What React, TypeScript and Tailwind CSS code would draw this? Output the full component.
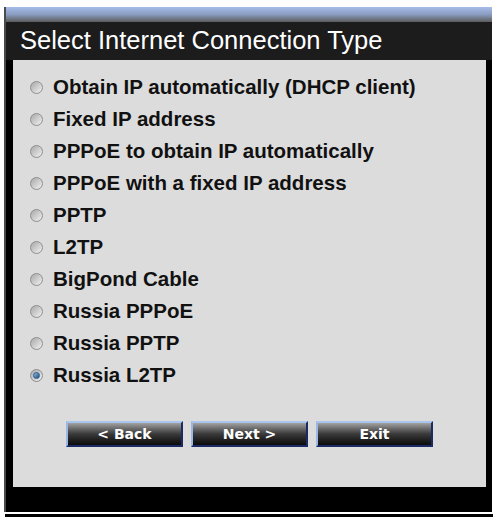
import React from 'react';

const options = [
  'Obtain IP automatically (DHCP client)',
  'Fixed IP address',
  'PPPoE to obtain IP automatically',
  'PPPoE with a fixed IP address',
  'PPTP',
  'L2TP',
  'BigPond Cable',
  'Russia PPPoE',
  'Russia PPTP',
  'Russia L2TP',
];

const Radio: React.FC<{ checked: boolean }> = ({ checked }) => (
  <span className="w-[13px] h-[13px] rounded-full border border-[#8e8e8e] bg-gradient-to-br from-[#a8a8a8] to-[#f2f2f2] flex items-center justify-center shrink-0">
    {checked && (
      <span className="w-[7px] h-[7px] rounded-full bg-gradient-to-br from-[#8cc0e6] to-[#1d4f7c] border border-[#2a5a88]" />
    )}
  </span>
);

const WizButton: React.FC<{ label: string }> = ({ label }) => (
  <button
    className="w-[117px] h-[26px] border-2 border-t-[#a9c6ef] border-l-[#9ab8e6] border-r-[#1b2a66] border-b-[#1b2a66] bg-gradient-to-b from-[#a2a2a2] via-[#3a3a3a] to-[#0b0b0b] text-white text-[14px] font-bold font-['DejaVu_Sans',Verdana,sans-serif] leading-none"
  >
    {label}
  </button>
);

export default function App() {
  const selected = 9;
  return (
    <div className="w-[493px] h-[517px] bg-white overflow-hidden font-['Liberation_Sans',Arial,sans-serif]">
      <div className="ml-[4px] mt-[7px] w-[488px] h-[505px] bg-black border-l-2 border-[#4a4a4a] flex flex-col">
        <div className="h-[15px] bg-gradient-to-b from-[#a6bdea] via-[#8a9cc0] to-[#5c5c5c]" />
        <div className="h-[38px] bg-[#1c1c1c] pl-[14px] flex items-center text-white text-[25.5px] leading-none">
          Select Internet Connection Type
        </div>
        <div className="ml-[7px] mr-[6px] h-[427px] bg-[#dcdcdc] pt-[11px]">
          <div className="flex flex-col">
            {options.map((o, i) => (
              <div key={o} className="h-[32px] flex items-center pl-[17px] gap-[10px]">
                <Radio checked={i === selected} />
                <span className="text-[20.5px] font-bold text-[#111] leading-none">{o}</span>
              </div>
            ))}
          </div>
          <div className="mt-[30px] flex justify-center gap-[8px]">
            <WizButton label="< Back" />
            <WizButton label="Next >" />
            <WizButton label="Exit" />
          </div>
        </div>
      </div>
      <div className="mt-[2px] ml-[5px] h-[3px] bg-black" />
    </div>
  );
}
